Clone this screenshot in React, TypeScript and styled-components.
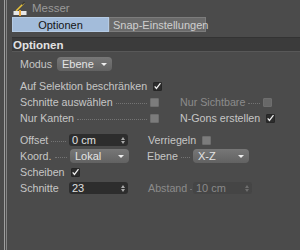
import styled, { createGlobalStyle } from "styled-components";

const GlobalStyle = createGlobalStyle`
  html, body {
    margin: 0;
    padding: 0;
    background: #4b4b4b;
  }
  body {
    font-family: "Liberation Sans", Arial, sans-serif;
    font-size: 10.7px;
    color: #c6c6c6;
  }
`;

const Frame = styled.div`
  display: flex;
  width: 300px;
  height: 250px;
  overflow: hidden;
  background: #4b4b4b;
`;

const Gutter = styled.div`
  width: 12px;
  flex: none;
  box-sizing: border-box;
  padding-left: 4px;
  display: flex;
  gap: 1px;

  span {
    width: 1px;
    background: #a0a0a0;
  }
  span + span {
    background: #858585;
  }
`;

const Panel = styled.div`
  flex: 1;
  display: flex;
  flex-direction: column;
`;

const Header = styled.div`
  height: 16px;
  display: flex;
  align-items: center;
  gap: 5px;
  padding-left: 1px;
  color: #9a9a9a;
  font-size: 11.5px;
`;

const TabBar = styled.div`
  display: flex;
  margin-top: 1px;
  height: 15px;
`;

type TabProps = { $active?: boolean };

const Tab = styled.div<TabProps>`
  width: 97px;
  box-sizing: border-box;
  display: flex;
  align-items: center;
  justify-content: ${({ $active }) => ($active ? "center" : "flex-start")};
  padding-left: ${({ $active }) => ($active ? "0" : "3px")};
  font-size: 11px;
  white-space: nowrap;
  background: ${({ $active }) => ($active ? "#a3bcda" : "#6a6a6a")};
  color: ${({ $active }) => ($active ? "#141414" : "#cfcfcf")};
  border: 1px solid ${({ $active }) => ($active ? "#b5cbe4" : "#7c7c7c")};
`;

const SectionBar = styled.div`
  margin-top: 5px;
  height: 13px;
  display: flex;
  align-items: center;
  padding-left: 1px;
  background: #3b3b3b;
  border-top: 1px solid #333;
  border-bottom: 1px solid #585858;
  color: #e2e2e2;
  font-weight: bold;
  font-size: 11.5px;
`;

const Form = styled.div`
  display: flex;
  flex-direction: column;
  padding: 4px 0 0 8px;
`;

type RowProps = { $h?: number; $gap?: number };

const Row = styled.div<RowProps>`
  display: flex;
  align-items: center;
  height: ${({ $h }) => $h ?? 16}px;
  margin-top: ${({ $gap }) => $gap ?? 0}px;
`;

type FieldProps = { $w: number; $ml?: number; $dim?: boolean };

const Field = styled.div<FieldProps>`
  display: flex;
  align-items: center;
  width: ${({ $w }) => $w}px;
  margin-left: ${({ $ml }) => $ml ?? 0}px;
  flex: none;
  color: ${({ $dim }) => ($dim ? "#8c8c8c" : "#c6c6c6")};
  white-space: nowrap;
`;

const Leader = styled.span<{ $plain?: boolean }>`
  flex: 1;
  align-self: flex-end;
  margin: 0 3px 4px 3px;
  border-bottom: 1px ${({ $plain }) => ($plain ? "solid transparent" : "dotted #747474")};
  min-width: ${({ $plain }) => ($plain ? 0 : 4)}px;
`;

type BoxProps = { $on?: boolean; $dim?: boolean };

const Check = styled.span<BoxProps>`
  width: 9px;
  height: 9px;
  flex: none;
  box-sizing: border-box;
  border-radius: 1px;
  display: inline-flex;
  align-items: center;
  justify-content: center;
  background: ${({ $on, $dim }) => ($on ? "#2c2c2c" : $dim ? "#686868" : "#7c7c7c")};
  border: 1px solid ${({ $on }) => ($on ? "#262626" : "#6e6e6e")};
`;

const Dropdown = styled.div<{ $w: number }>`
  width: ${({ $w }) => $w}px;
  height: 14px;
  flex: none;
  box-sizing: border-box;
  display: flex;
  align-items: center;
  justify-content: space-between;
  padding: 0 5px;
  border-radius: 4px;
  background: linear-gradient(#777, #626262);
  color: #e4e4e4;
  font-size: 11px;

  &::after {
    content: "";
    border-left: 3px solid transparent;
    border-right: 3px solid transparent;
    border-top: 3px solid #eee;
    margin-top: 1px;
  }
`;

const NumberInput = styled.div<{ $dim?: boolean }>`
  width: 59px;
  height: 12px;
  flex: none;
  box-sizing: border-box;
  display: flex;
  align-items: center;
  justify-content: space-between;
  padding: 0 3px;
  border-radius: 3px;
  background: ${({ $dim }) => ($dim ? "#454545" : "#2d2d2d")};
  color: ${({ $dim }) => ($dim ? "#8a8a8a" : "#e0e0e0")};
  font-size: 11px;
`;

const Spinner = styled.span<{ $dim?: boolean }>`
  display: flex;
  flex-direction: column;
  gap: 1px;

  i {
    display: block;
    border-left: 2px solid transparent;
    border-right: 2px solid transparent;
  }
  i:first-child {
    border-bottom: 3px solid ${({ $dim }) => ($dim ? "#6e6e6e" : "#aaa")};
  }
  i:last-child {
    border-top: 3px solid ${({ $dim }) => ($dim ? "#6e6e6e" : "#aaa")};
  }
`;

function Tick() {
  return (
    <svg width="8" height="8" viewBox="0 0 8 8">
      <path d="M0.8 4.4 L2.8 6.8 L7.4 0.8" stroke="#f2f2f2" strokeWidth="1.4" fill="none" />
    </svg>
  );
}

function Box({ on, dim }: { on?: boolean; dim?: boolean }) {
  return (
    <Check $on={on} $dim={dim}>
      {on && <Tick />}
    </Check>
  );
}

function Num({ value, dim }: { value: string; dim?: boolean }) {
  return (
    <NumberInput $dim={dim}>
      <span>{value}</span>
      <Spinner $dim={dim}>
        <i />
        <i />
      </Spinner>
    </NumberInput>
  );
}

function KnifeIcon() {
  return (
    <svg width="14" height="15" viewBox="0 0 14 15">
      <path d="M3 10 L11 2" stroke="#e8c23a" strokeWidth="1.6" />
      <path d="M9 3.5 L11.5 1" stroke="#333" strokeWidth="1.4" />
      <rect x="0.5" y="10" width="13" height="4" fill="#e6e6e6" />
      <rect x="6" y="9" width="2" height="6" fill="#e8a53a" />
    </svg>
  );
}

export default function App() {
  return (
    <Frame>
      <GlobalStyle />
      <Gutter>
        <span />
        <span />
      </Gutter>
      <Panel>
        <Header>
          <KnifeIcon />
          <span>Messer</span>
        </Header>
        <TabBar>
          <Tab $active>Optionen</Tab>
          <Tab>Snap-Einstellungen</Tab>
        </TabBar>
        <SectionBar>Optionen</SectionBar>
        <Form>
          <Row $h={15}>
            <Field $w={37}>Modus</Field>
            <Dropdown $w={55}>Ebene</Dropdown>
          </Row>

          <Row $gap={7}>
            <Field $w={139}>
              Auf Selektion beschränken
              <Leader $plain />
              <Box on />
            </Field>
          </Row>
          <Row>
            <Field $w={139}>
              Schnitte auswählen
              <Leader />
              <Box />
            </Field>
            <Field $w={92} $ml={21} $dim>
              Nur Sichtbare
              <Leader />
              <Box dim />
            </Field>
          </Row>
          <Row>
            <Field $w={139}>
              Nur Kanten
              <Leader />
              <Box />
            </Field>
            <Field $w={92} $ml={21}>
              N-Gons erstellen
              <Leader $plain />
              <Box on />
            </Field>
          </Row>

          <Row $gap={6}>
            <Field $w={49}>
              Offset
              <Leader />
            </Field>
            <Num value="0 cm" />
            <Field $w={54} $ml={20}>
              Verriegeln
              <Leader $plain />
              <Box />
            </Field>
          </Row>
          <Row>
            <Field $w={50}>
              Koord.
              <Leader />
            </Field>
            <Dropdown $w={59}>Lokal</Dropdown>
            <Field $w={46} $ml={18}>
              Ebene
              <Leader />
            </Field>
            <Dropdown $w={56}>X-Z</Dropdown>
          </Row>
          <Row>
            <Field $w={60}>
              Scheiben
              <Leader $plain />
              <Box on />
            </Field>
          </Row>
          <Row>
            <Field $w={49}>Schnitte</Field>
            <Num value="23" />
            <Field $w={45} $ml={20} $dim>
              Abstand
              <Leader />
            </Field>
            <Num value="10 cm" dim />
          </Row>
        </Form>
      </Panel>
    </Frame>
  );
}
